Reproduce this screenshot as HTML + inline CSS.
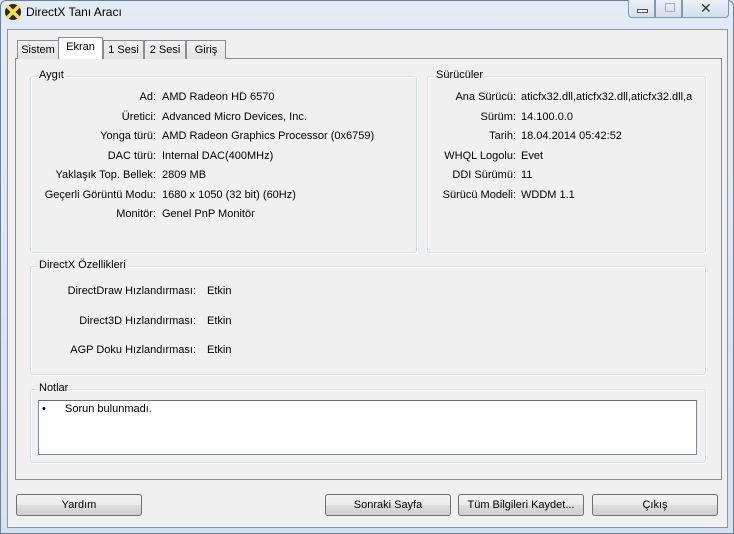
<!DOCTYPE html>
<html><head><meta charset="utf-8"><style>
*{margin:0;padding:0;box-sizing:border-box}
body{width:734px;height:534px;overflow:hidden;background:#dce6f2;font-family:"Liberation Sans","DejaVu Sans",sans-serif;font-size:11px;color:#000;position:relative}
.a{position:absolute;white-space:nowrap}
.frame{position:absolute;left:0;top:0;width:734px;height:534px;background:linear-gradient(#e3ebf5,#d6e1ef);border:1px solid #6f7f94;border-radius:6px 6px 0 0}
.client{position:absolute;left:7px;top:29px;width:721px;height:499px;background:#f0f0f0;border:1px solid #8a96a5}
.panel{position:absolute;left:15px;top:58px;width:707px;height:422px;background:#f0f0f0;border:1px solid #898c95}
.tab{position:absolute;top:40px;height:19px;border:1px solid #898c95;border-bottom:none;background:linear-gradient(#f2f2f2,#e3e3e3);padding:3px 0 0;text-align:center;font-size:11px}
.tab.sel{top:37px;height:22px;background:#fff;z-index:2;padding-top:3px}
.grp{position:absolute;border:1px solid #d5dfe5;border-radius:3px;box-shadow:inset 1px 1px 0 #fff,1px 1px 0 #fff}
.gl{position:absolute;top:-8px;left:6px;background:#f0f0f0;padding:0 2px}
.r{text-align:right}
.btn{position:absolute;top:494px;height:22px;width:126px;border:1px solid #707070;border-radius:3px;background:linear-gradient(#f2f2f2 0,#ebebeb 50%,#dddddd 51%,#cfcfcf 100%);text-align:center;line-height:20px;font-size:11px}
.wb{position:absolute;top:0;height:18px;border:1px solid #8796ab;border-top:none;background:linear-gradient(#eaf0f7,#d4deeb)}
</style></head><body>
<div class="frame"></div>
<svg class="a" style="left:4px;top:3px" width="18" height="18" viewBox="0 0 18 18"><circle cx="9" cy="9" r="8" fill="#2a2a2a"/><path d="M4 4L14 14M14 4L4 14" stroke="#f3e24a" stroke-width="3.5" stroke-linecap="round"/></svg>
<div class="a" style="left:26px;top:5px;font-size:12px">DirectX Tanı Aracı</div>
<div class="wb" style="left:628px;width:27px;border-radius:0 0 0 4px"><div class="a" style="left:8px;top:9px;width:11px;height:4px;border:1px solid #555;background:#fff"></div></div>
<div class="wb" style="left:655px;width:27px"><div class="a" style="left:9px;top:3px;width:10px;height:9px;border:1px solid #aab"></div></div>
<div class="wb" style="left:682px;width:47px;border-radius:0 0 4px 0"><div class="a" style="left:17px;top:0px;font-size:14px;color:#333;font-weight:bold">✕</div></div>
<div class="client"></div>
<div class="panel"></div>
<div class="tab" style="left:17px;width:42px">Sistem</div>
<div class="tab sel" style="left:58px;width:45px">Ekran</div>
<div class="tab" style="left:103px;width:41px">1 Sesi</div>
<div class="tab" style="left:144px;width:42px">2 Sesi</div>
<div class="tab" style="left:186px;width:40px">Giriş</div>

<div class="grp" style="left:30px;top:76px;width:387px;height:177px"><div class="gl">Aygıt</div></div>
<div class="grp" style="left:427px;top:76px;width:279px;height:177px"><div class="gl">Sürücüler</div></div>
<div class="grp" style="left:30px;top:266px;width:676px;height:109px"><div class="gl">DirectX Özellikleri</div></div>
<div class="grp" style="left:30px;top:389px;width:676px;height:74px"><div class="gl">Notlar</div></div>

<div class="a r" style="right:578px;top:88px;line-height:19.5px">Ad:<br>Üretici:<br>Yonga türü:<br>DAC türü:<br>Yaklaşık Top. Bellek:<br>Geçerli Görüntü Modu:<br>Monitör:</div>
<div class="a" style="left:162px;top:88px;line-height:19.5px">AMD Radeon HD 6570<br>Advanced Micro Devices, Inc.<br>AMD Radeon Graphics Processor (0x6759)<br>Internal DAC(400MHz)<br>2809 MB<br>1680 x 1050 (32 bit) (60Hz)<br>Genel PnP Monitör</div>

<div class="a r" style="right:218px;top:88px;line-height:19.5px">Ana Sürücü:<br>Sürüm:<br>Tarih:<br>WHQL Logolu:<br>DDI Sürümü:<br>Sürücü Modeli:</div>
<div class="a" style="left:521px;top:88px;line-height:19.5px;width:180px;overflow:hidden">aticfx32.dll,aticfx32.dll,aticfx32.dll,a<br>14.100.0.0<br>18.04.2014 05:42:52<br>Evet<br>11<br>WDDM 1.1</div>

<div class="a r" style="right:538px;top:277px;line-height:29.5px">DirectDraw Hızlandırması:<br>Direct3D Hızlandırması:<br>AGP Doku Hızlandırması:</div>
<div class="a" style="left:207px;top:277px;line-height:29.5px">Etkin<br>Etkin<br>Etkin</div>

<div class="a" style="left:38px;top:400px;width:659px;height:55px;background:#fff;border:1px solid #828790;border-top-color:#6d6d6d"></div>
<div class="a" style="left:42px;top:403px">•</div>
<div class="a" style="left:65px;top:403px">Sorun bulunmadı.</div>

<div class="btn" style="left:16px">Yardım</div>
<div class="btn" style="left:325px">Sonraki Sayfa</div>
<div class="btn" style="left:458px">Tüm Bilgileri Kaydet...</div>
<div class="btn" style="left:592px">Çıkış</div>
</body></html>
